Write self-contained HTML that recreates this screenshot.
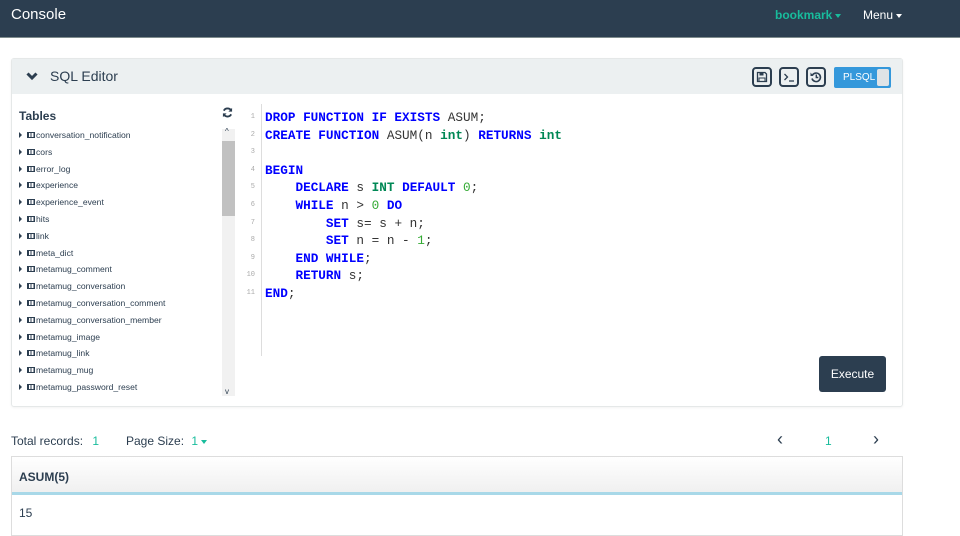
<!DOCTYPE html>
<html><head><style>
*{box-sizing:border-box;margin:0;padding:0}
body{width:960px;height:531px;overflow:hidden;background:#fff;font-family:"Liberation Sans",sans-serif;color:#2c3e50;position:relative}
.nav{position:absolute;left:0;top:0;width:960px;height:38px;background:#2c3e50;border-bottom:1px solid #7f8c8d}
.nav .t{position:absolute;left:11px;top:6px;color:#fff;font-size:15px}
.nav .b{position:absolute;left:775px;top:8px;color:#18bc9c;font-size:12px;font-weight:bold}
.nav .m{position:absolute;left:863px;top:8px;color:#fff;font-size:12px}
.car{display:inline-block;border-left:3.5px solid transparent;border-right:3.5px solid transparent;border-top:4px solid currentColor;vertical-align:middle;margin-left:3px}
.panel{position:absolute;left:11px;top:58px;width:892px;height:349px;border:1px solid #e5e8e8;border-radius:3px;box-shadow:0 1px 2px rgba(0,0,0,.05)}
.ph{height:35px;background:#ecf0f1;position:relative}
.ph .tt{position:absolute;left:38px;top:9px;font-size:14px}
.ic{position:absolute;top:8px;width:20px;height:20px;border:2px solid #2c3e50;border-radius:4px}
.ic svg{position:absolute;left:2px;top:2px}
.tog{position:absolute;left:822px;top:8px;width:57px;height:21px;background:#3498db;border-radius:2px;color:#fff;font-size:10px;line-height:21px;padding-left:9px}
.tog i{position:absolute;right:2px;top:2px;width:12px;height:17px;background:#dfe3e6;border-radius:2px}
.tbl{position:absolute;left:7px;top:50px;font-size:12px;font-weight:bold}
.list{position:absolute;left:7px;top:71px;font-size:8.6px;color:#2c3e50}
.list div{height:16.8px;white-space:nowrap}
.list div:before{content:"";display:inline-block;border-top:3px solid transparent;border-bottom:3px solid transparent;border-left:3px solid #2c3e50;margin-right:5px}
.list span{display:inline-block;width:8px;height:6px;border:1px solid #2c3e50;margin-right:1px;background:repeating-linear-gradient(90deg,#2c3e50 0 1px,transparent 1px 2.7px)}
.sb{position:absolute;left:210px;top:70px;width:13px;height:267px;background:#f1f1f1}
.sb i{position:absolute;left:0;top:12px;width:13px;height:75px;background:#c1c1c1}
.code{position:absolute;top:50px;font-family:"Liberation Mono",monospace;font-size:12.7px;line-height:17.6px}
.gut{position:absolute;left:228px;top:45px;width:22px;height:252px;border-right:1px solid #ddd;font-size:7px;color:#aaa;text-align:right;padding-right:6px;line-height:17.6px;padding-top:5px;font-family:"Liberation Mono",monospace}
.k{color:#00f;font-weight:bold}.ty{color:#085;font-weight:bold}.num{color:#3a3}
.code div{height:17.6px;white-space:pre;color:#333}
.ex{position:absolute;left:807px;top:297px;width:67px;height:36px;background:#2c3e50;border-radius:3px;color:#fff;font-size:12px;text-align:center;line-height:36px}
.foot{position:absolute;top:434px;font-size:12px}
.res{position:absolute;left:11px;top:456px;width:892px;height:80px;border:1px solid #ddd}
.rh{height:38px;background:linear-gradient(#fff,#f0f0f0);border-bottom:3px solid #a8d8e8;font-size:12px;font-weight:bold;padding:13px 0 0 7px}
.rc{font-size:12px;padding:11px 0 0 7px}
</style></head><body>
<div class="nav"><div class="t">Console</div><div class="b">bookmark<span class="car"></span></div><div class="m">Menu<span class="car"></span></div></div>
<div class="panel">
<div class="ph">
<svg style="position:absolute;left:14px;top:13px" width="12" height="9" viewBox="0 0 12 9"><path d="M1.5 1.5L6 6L10.5 1.5" stroke="#2c3e50" stroke-width="3" fill="none"/></svg>
<div class="tt">SQL Editor</div>
<div class="ic" style="left:740px"><svg width="12" height="12" viewBox="0 0 12 12"><path d="M1.5 1.5h7.5l1.5 1.5v7.5h-9z" stroke="#2c3e50" stroke-width="1.3" fill="none"/><rect x="3.5" y="1.5" width="4" height="3" fill="#2c3e50"/><rect x="3" y="7" width="6" height="3.5" stroke="#2c3e50" fill="none"/></svg></div>
<div class="ic" style="left:767px"><svg width="12" height="12" viewBox="0 0 12 12"><path d="M1.5 3L4.5 6L1.5 9" stroke="#2c3e50" stroke-width="1.3" fill="none"/><path d="M6 10h5" stroke="#2c3e50" stroke-width="1.3"/></svg></div>
<div class="ic" style="left:794px"><svg width="12" height="12" viewBox="0 0 12 12"><path d="M2.5 4A4.3 4.3 0 1 1 2 7.5" stroke="#2c3e50" stroke-width="1.6" fill="none"/><path d="M0.5 1.5L3.5 5L0.5 5z" fill="#2c3e50"/><path d="M6.3 3.5v3h2" stroke="#2c3e50" stroke-width="1.4" fill="none"/></svg></div>
<div class="tog">PLSQL<i></i></div>
</div>
<div class="tbl">Tables</div>
<svg style="position:absolute;left:210px;top:48px" width="11" height="11" viewBox="0 0 12 12"><path d="M10 4A4.5 4.5 0 0 0 2 4M2 8A4.5 4.5 0 0 0 10 8" stroke="#2c3e50" stroke-width="2" fill="none"/><path d="M11 1v4H7zM1 11V7h4z" fill="#2c3e50"/></svg>
<div class="list">
<div><span></span>conversation_notification</div><div><span></span>cors</div><div><span></span>error_log</div><div><span></span>experience</div><div><span></span>experience_event</div><div><span></span>hits</div><div><span></span>link</div><div><span></span>meta_dict</div><div><span></span>metamug_comment</div><div><span></span>metamug_conversation</div><div><span></span>metamug_conversation_comment</div><div><span></span>metamug_conversation_member</div><div><span></span>metamug_image</div><div><span></span>metamug_link</div><div><span></span>metamug_mug</div><div><span></span>metamug_password_reset</div>
</div>
<div class="sb"><i></i><span style="position:absolute;left:3px;top:-2px;font-size:8px">^</span><span style="position:absolute;left:3px;bottom:0;font-size:8px">v</span></div>
<div class="gut">1<br>2<br>3<br>4<br>5<br>6<br>7<br>8<br>9<br>10<br>11</div>
<div class="code" style="left:253px">
<div><span class="k">DROP FUNCTION IF EXISTS</span> ASUM;</div>
<div><span class="k">CREATE FUNCTION</span> ASUM(n <span class="ty">int</span>) <span class="k">RETURNS</span> <span class="ty">int</span></div>
<div></div>
<div><span class="k">BEGIN</span></div>
<div>    <span class="k">DECLARE</span> s <span class="ty">INT</span> <span class="k">DEFAULT</span> <span class="num">0</span>;</div>
<div>    <span class="k">WHILE</span> n &gt; <span class="num">0</span> <span class="k">DO</span></div>
<div>        <span class="k">SET</span> s= s + n;</div>
<div>        <span class="k">SET</span> n = n - <span class="num">1</span>;</div>
<div>    <span class="k">END WHILE</span>;</div>
<div>    <span class="k">RETURN</span> s;</div>
<div><span class="k">END</span>;</div>
</div>
<div class="ex">Execute</div>
</div>
<div class="foot" style="left:11px">Total records: <span style="color:#18bc9c;margin-left:6px">1</span></div>
<div class="foot" style="left:126px">Page Size: <span style="color:#18bc9c;margin-left:4px">1</span><span class="car" style="color:#18bc9c"></span></div>
<div class="foot" style="left:777px;font-size:18px;top:429px">&#x2039;</div>
<div class="foot" style="left:825px;color:#18bc9c">1</div>
<div class="foot" style="left:873px;font-size:18px;top:429px">&#x203A;</div>
<div class="res"><div class="rh">ASUM(5)</div><div class="rc">15</div></div>
</body></html>
